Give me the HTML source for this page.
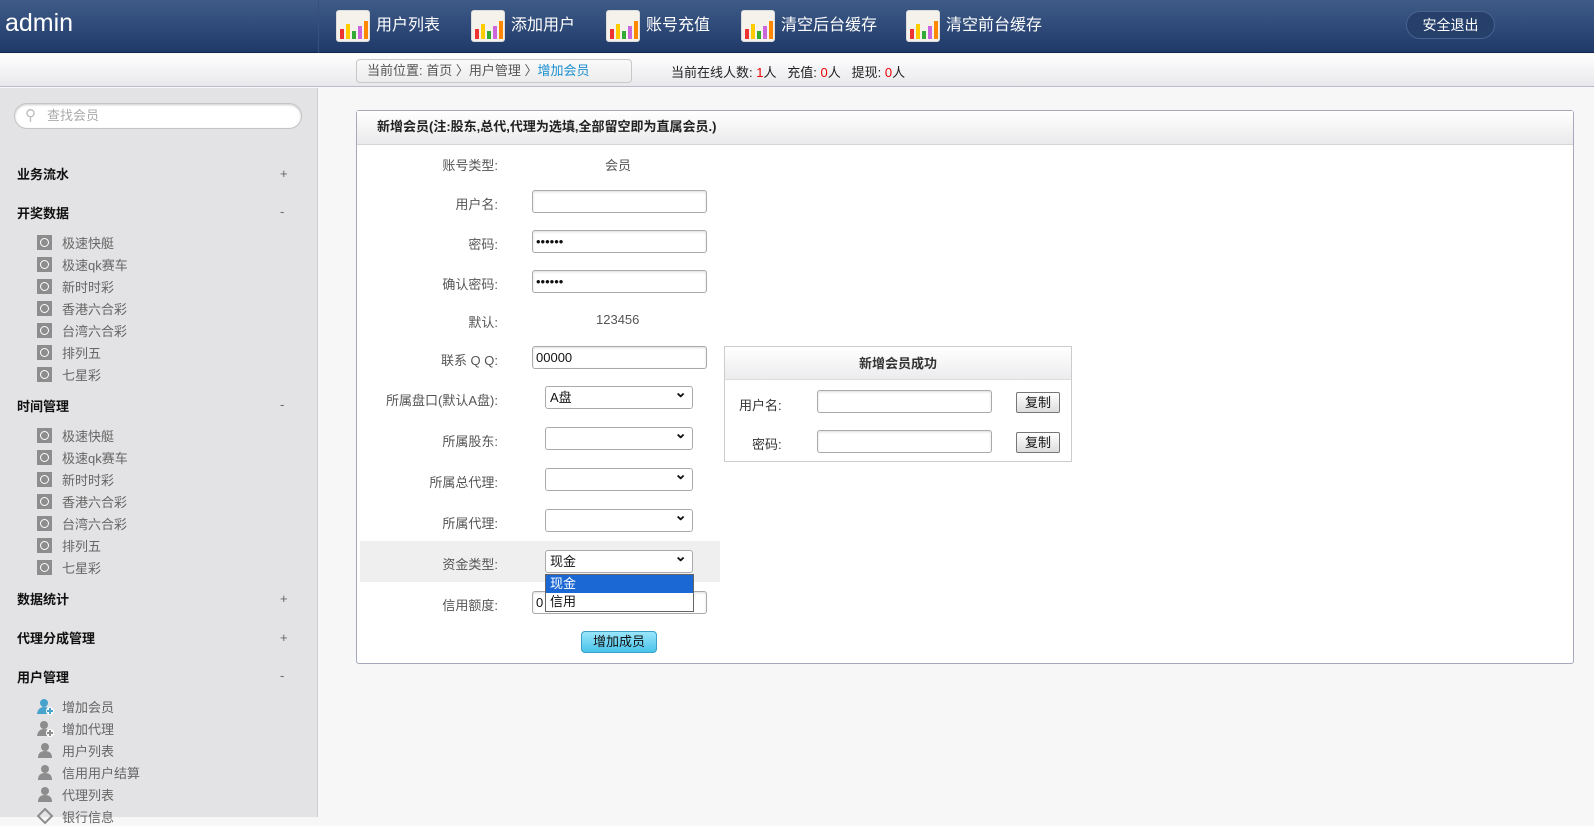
<!DOCTYPE html>
<html><head><meta charset="utf-8"><style>
*{margin:0;padding:0;box-sizing:border-box}
body{width:1594px;height:817px;overflow:hidden;background:#f7f7f7;font-family:"Liberation Sans","Noto Sans CJK SC",sans-serif;font-size:13px;color:#555;position:relative}
.a{position:absolute}
#top{left:0;top:0;width:1594px;height:53px;background:linear-gradient(#3f5b87,#1f3a6a);border-bottom:1px solid #15294d}
#top .sep{left:318px;top:0;width:1px;height:53px;background:#35507c}
.logo{left:5px;top:9px;font-size:25px;color:#fff}
.nav{top:10px;height:32px;color:#fff;font-size:16px;line-height:34px;display:flex;align-items:center}
.ic{width:34px;height:32px;background:#f4f2ea;border-radius:3px;margin-right:6px;position:relative;overflow:hidden;border:1px solid #ddd}
.ic i{position:absolute;bottom:2px;width:4px}
.logout{left:1406px;top:11px;width:89px;height:28px;border-radius:14px;background:#263f6b;border:1px solid #4a6290;color:#fff;font-size:14px;text-align:center;line-height:26px}
#bar{left:0;top:54px;width:1594px;height:33px;background:linear-gradient(#fff,#e8e8ec);border-bottom:1px solid #b8bccb}
.crumb{left:356px;top:59px;height:24px;width:276px;border:1px solid #c8c8c8;border-radius:4px;background:linear-gradient(#fafafa,#ececec);font-size:13px;line-height:22px;color:#555;padding-left:10px}
.online{left:671px;top:62px;font-size:13px;color:#222}
.online b{color:#e00;font-weight:normal}
#side{left:0;top:88px;width:318px;height:729px;background:#e3e3e5;border-right:1px solid #cfcfd3}
.search{left:14px;top:103px;width:288px;height:26px;border:1px solid #c4c4c4;border-radius:13px;background:#fff;color:#aaa;padding-left:32px;line-height:24px;box-shadow:inset 0 1px 2px #ccc}
.sh{left:17px;font-size:13px;font-weight:bold;color:#111}
.pm{left:280px;color:#666;font-size:13px}
.it{left:37px;font-size:13px;color:#666;display:flex;align-items:center;height:20px}
.it s{display:inline-block;width:15px;height:15px;background:#8d8d8d;margin-right:10px;position:relative;text-decoration:none}
.it s:after{content:"";position:absolute;left:3px;top:3px;width:7px;height:7px;border:1px solid #fff;border-radius:50%}
.it svg{margin-right:8px}
#panel{left:356px;top:110px;width:1218px;height:554px;border:1px solid #a5a9b9;border-radius:3px;background:#fff}
.ph{left:0;top:0;width:100%;height:34px;background:linear-gradient(#fff,#eaeaec);border-bottom:1px solid #d4d4d8;font-weight:bold;color:#222;padding-left:20px;line-height:32px}
.lb{width:140px;text-align:right;color:#555}
.inp{height:23px;border:1px solid #aaa;border-radius:3px;background:#fff;box-shadow:inset 0 1px 2px #ddd;font-size:13px;color:#111;padding-left:3px;line-height:21px}
.sel{width:148px;height:23px;border:1px solid #aaa;border-radius:3px;background:#fff;color:#111;padding-left:4px;line-height:21px}
.sel:after{content:"⌄";position:absolute;right:5px;top:-5px;font-size:15px;font-weight:bold}
.btn{border:1px solid #777;background:linear-gradient(#fff,#ddd);height:21px;width:44px;text-align:center;line-height:19px;color:#111;font-size:13px;border-radius:2px}
</style></head><body>
<div id="top" class="a"><div class="a sep"></div>
<div class="a logo">admin</div>
<div class="a nav" style="left:336px"><div class="ic"><i style="left:3px;height:10px;background:#e33"></i><i style="left:9px;height:15px;background:#fc0"></i><i style="left:15px;height:8px;background:#3a3"></i><i style="left:21px;height:13px;background:#c6d"></i><i style="left:27px;height:18px;background:#f80"></i></div>用户列表</div>
<div class="a nav" style="left:471px"><div class="ic"><i style="left:3px;height:10px;background:#e33"></i><i style="left:9px;height:15px;background:#fc0"></i><i style="left:15px;height:8px;background:#3a3"></i><i style="left:21px;height:13px;background:#c6d"></i><i style="left:27px;height:18px;background:#f80"></i></div>添加用户</div>
<div class="a nav" style="left:606px"><div class="ic"><i style="left:3px;height:10px;background:#e33"></i><i style="left:9px;height:15px;background:#fc0"></i><i style="left:15px;height:8px;background:#3a3"></i><i style="left:21px;height:13px;background:#c6d"></i><i style="left:27px;height:18px;background:#f80"></i></div>账号充值</div>
<div class="a nav" style="left:741px"><div class="ic"><i style="left:3px;height:10px;background:#e33"></i><i style="left:9px;height:15px;background:#fc0"></i><i style="left:15px;height:8px;background:#3a3"></i><i style="left:21px;height:13px;background:#c6d"></i><i style="left:27px;height:18px;background:#f80"></i></div>清空后台缓存</div>
<div class="a nav" style="left:906px"><div class="ic"><i style="left:3px;height:10px;background:#e33"></i><i style="left:9px;height:15px;background:#fc0"></i><i style="left:15px;height:8px;background:#3a3"></i><i style="left:21px;height:13px;background:#c6d"></i><i style="left:27px;height:18px;background:#f80"></i></div>清空前台缓存</div>
<div class="a logout">安全退出</div>
</div>
<div id="bar" class="a"></div>
<div class="a crumb">当前位置: 首页 〉用户管理 〉<span style="color:#1a8fd0">增加会员</span></div>
<div class="a online">当前在线人数: <b>1</b>人 &nbsp; 充值: <b>0</b>人 &nbsp; 提现: <b>0</b>人</div>

<div id="side" class="a"></div>
<div class="a search"><span style="position:absolute;left:10px;top:0;color:#bbb;font-size:15px">&#9906;</span>查找会员</div>
<div class="a sh" style="top:164px">业务流水</div><div class="a pm" style="top:166px">+</div>
<div class="a sh" style="top:203px">开奖数据</div><div class="a pm" style="top:204px">-</div>
<div class="a it" style="top:232px"><s></s>极速快艇</div>
<div class="a it" style="top:254px"><s></s>极速qk赛车</div>
<div class="a it" style="top:276px"><s></s>新时时彩</div>
<div class="a it" style="top:298px"><s></s>香港六合彩</div>
<div class="a it" style="top:320px"><s></s>台湾六合彩</div>
<div class="a it" style="top:342px"><s></s>排列五</div>
<div class="a it" style="top:364px"><s></s>七星彩</div>
<div class="a sh" style="top:396px">时间管理</div><div class="a pm" style="top:397px">-</div>
<div class="a it" style="top:425px"><s></s>极速快艇</div>
<div class="a it" style="top:447px"><s></s>极速qk赛车</div>
<div class="a it" style="top:469px"><s></s>新时时彩</div>
<div class="a it" style="top:491px"><s></s>香港六合彩</div>
<div class="a it" style="top:513px"><s></s>台湾六合彩</div>
<div class="a it" style="top:535px"><s></s>排列五</div>
<div class="a it" style="top:557px"><s></s>七星彩</div>
<div class="a sh" style="top:589px">数据统计</div><div class="a pm" style="top:591px">+</div>
<div class="a sh" style="top:628px">代理分成管理</div><div class="a pm" style="top:630px">+</div>
<div class="a sh" style="top:667px">用户管理</div><div class="a pm" style="top:668px">-</div>
<div class="a it" style="top:696px"><svg width="17" height="17"><circle cx="7" cy="5" r="4" fill="#48a3cc"/><path d="M0 16 Q1 9 7 9 Q12 9 13 12 L13 16Z" fill="#48a3cc"/><circle cx="13" cy="13" r="4" fill="#fff"/><path d="M13 10v6M10 13h6" stroke="#48a3cc" stroke-width="2"/></svg>增加会员</div>
<div class="a it" style="top:718px"><svg width="17" height="17"><circle cx="7" cy="5" r="4" fill="#8d8d8d"/><path d="M0 16 Q1 9 7 9 Q12 9 13 12 L13 16Z" fill="#8d8d8d"/><circle cx="13" cy="13" r="4" fill="#fff"/><path d="M13 10v6M10 13h6" stroke="#8d8d8d" stroke-width="2"/></svg>增加代理</div>
<div class="a it" style="top:740px"><svg width="17" height="17"><circle cx="8" cy="5" r="4" fill="#8d8d8d"/><path d="M1 16 Q1 9 8 9 Q15 9 15 16Z" fill="#8d8d8d"/></svg>用户列表</div>
<div class="a it" style="top:762px"><svg width="17" height="17"><circle cx="8" cy="5" r="4" fill="#8d8d8d"/><path d="M1 16 Q1 9 8 9 Q15 9 15 16Z" fill="#8d8d8d"/></svg>信用用户结算</div>
<div class="a it" style="top:784px"><svg width="17" height="17"><circle cx="8" cy="5" r="4" fill="#8d8d8d"/><path d="M1 16 Q1 9 8 9 Q15 9 15 16Z" fill="#8d8d8d"/></svg>代理列表</div>
<div class="a it" style="top:806px"><svg width="17" height="17"><path d="M8 1L15 8L8 15L1 8Z" fill="none" stroke="#8d8d8d" stroke-width="2"/></svg>银行信息</div>

<div id="panel" class="a"><div class="a ph">新增会员(注:股东,总代,代理为选填,全部留空即为直属会员.)</div></div>
<div class="a" style="left:360px;top:541px;width:360px;height:41px;background:#efefef"></div>
<div class="a lb" style="left:358px;top:155px">账号类型:</div><div class="a" style="left:605px;top:155px">会员</div>
<div class="a lb" style="left:358px;top:194px">用户名:</div><div class="a inp" style="left:532px;top:190px;width:175px"></div>
<div class="a lb" style="left:358px;top:234px">密码:</div><div class="a inp" style="left:532px;top:230px;width:175px">••••••</div>
<div class="a lb" style="left:358px;top:274px">确认密码:</div><div class="a inp" style="left:532px;top:270px;width:175px">••••••</div>
<div class="a lb" style="left:358px;top:312px">默认:</div><div class="a" style="left:596px;top:312px">123456</div>
<div class="a lb" style="left:358px;top:350px">联系 Q Q:</div><div class="a inp" style="left:532px;top:346px;width:175px">00000</div>
<div class="a lb" style="left:358px;top:390px">所属盘口(默认A盘):</div><div class="a sel" style="left:545px;top:386px">A盘</div>
<div class="a lb" style="left:358px;top:431px">所属股东:</div><div class="a sel" style="left:545px;top:427px"></div>
<div class="a lb" style="left:358px;top:472px">所属总代理:</div><div class="a sel" style="left:545px;top:468px"></div>
<div class="a lb" style="left:358px;top:513px">所属代理:</div><div class="a sel" style="left:545px;top:509px"></div>
<div class="a lb" style="left:358px;top:554px">资金类型:</div><div class="a sel" style="left:545px;top:550px">现金</div>
<div class="a lb" style="left:358px;top:595px">信用额度:</div><div class="a inp" style="left:532px;top:591px;width:175px">0</div>
<div class="a" style="left:545px;top:574px;width:149px;height:38px;border:1px solid #666;background:#fff;color:#111">
<div style="background:#1b68d4;color:#fff;height:18px;line-height:18px;padding-left:4px">现金</div>
<div style="height:18px;line-height:18px;padding-left:4px">信用</div></div>
<div class="a" style="left:581px;top:631px;width:76px;height:22px;border:1px solid #3aa0c8;border-radius:4px;background:linear-gradient(#9ae6fb,#49c3ea);color:#111;text-align:center;line-height:20px">增加成员</div>

<div class="a" style="left:724px;top:346px;width:348px;height:116px;border:1px solid #ccc;background:#fff">
<div style="height:33px;background:linear-gradient(#fff,#ececee);border-bottom:1px solid #ddd;text-align:center;line-height:33px;font-weight:bold;color:#333">新增会员成功</div></div>
<div class="a" style="left:739px;top:395px;color:#333">用户名:</div><div class="a inp" style="left:817px;top:390px;width:175px"></div><div class="a btn" style="left:1016px;top:392px">复制</div>
<div class="a" style="left:752px;top:434px;color:#333">密码:</div><div class="a inp" style="left:817px;top:430px;width:175px"></div><div class="a btn" style="left:1016px;top:432px">复制</div>
</body></html>
